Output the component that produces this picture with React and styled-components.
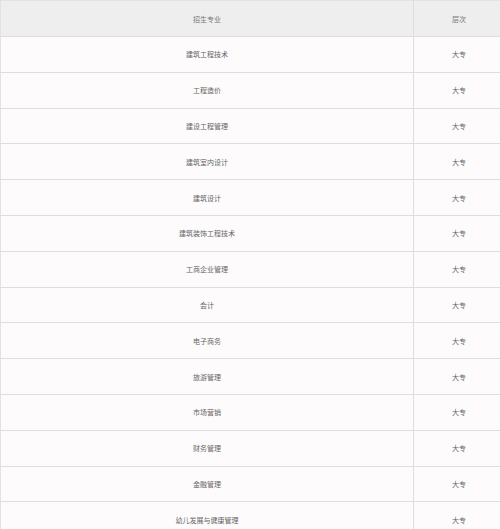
import React from "react";
import styled, { createGlobalStyle } from "styled-components";

const Global = createGlobalStyle`
  html, body { margin: 0; padding: 0; background: #fdfbfb; overflow: hidden; }
  body { font-family: "Noto Sans CJK SC", "Noto Sans", sans-serif; }
`;

const Table = styled.table`
  width: 503px;
  border-collapse: collapse;
  table-layout: fixed;
  border-top: 1px solid #e2e2e2;
  border-left: 1px solid #e2e2e2;
`;

const HeadCell = styled.th`
  height: 35px;
  padding: 0;
  background: #eeeeee;
  color: #777;
  font-size: 7px;
  font-weight: normal;
  text-align: center;
  vertical-align: middle;
  border-right: 1.5px solid #dedede;
  border-bottom: 1.5px solid #dedede;
  width: ${(p) => p.$w}px;
`;

const Cell = styled.td`
  height: 34.8px;
  padding: 0;
  color: #666;
  font-size: 7px;
  text-align: center;
  vertical-align: middle;
  border-right: 1.5px solid #dedede;
  border-bottom: 1.5px solid #dedede;
`;

const majors = [
  "建筑工程技术",
  "工程造价",
  "建设工程管理",
  "建筑室内设计",
  "建筑设计",
  "建筑装饰工程技术",
  "工商企业管理",
  "会计",
  "电子商务",
  "旅游管理",
  "市场营销",
  "财务管理",
  "金融管理",
  "幼儿发展与健康管理",
];

export default function App() {
  return (
    <>
      <Global />
      <Table>
        <thead>
          <tr>
            <HeadCell $w={412}>招生专业</HeadCell>
            <HeadCell $w={90}>层次</HeadCell>
          </tr>
        </thead>
        <tbody>
          {majors.map((m) => (
            <tr key={m}>
              <Cell>{m}</Cell>
              <Cell>大专</Cell>
            </tr>
          ))}
        </tbody>
      </Table>
    </>
  );
}
